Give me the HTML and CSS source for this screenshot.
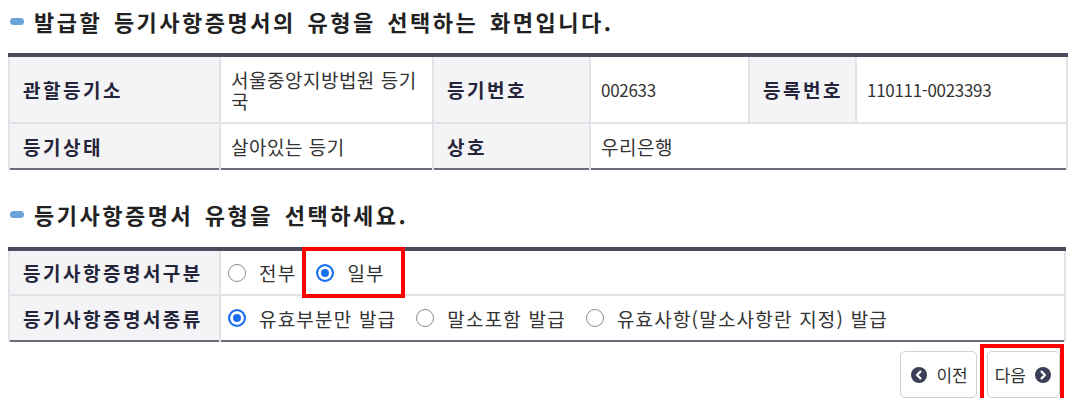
FILE: index.html
```html
<!DOCTYPE html>
<html lang="ko">
<head>
  <meta charset="UTF-8" />
  <meta name="viewport" content="width=device-width, initial-scale=1.0" />
  <title>등기사항증명서 발급</title>
  <link rel="stylesheet" href="styles.css">
</head>
<body>
  <div class="page">
    <h2 class="title">발급할 등기사항증명서의 유형을 선택하는 화면입니다.</h2>

    <table class="grid info">
      <colgroup>
        <col style="width: 211px">
        <col style="width: 213px">
        <col style="width: 157px">
        <col style="width: 159px">
        <col style="width: 107px">
        <col style="width: 211px">
      </colgroup>
      <tr class="tall">
        <th>관할등기소</th>
        <td>서울중앙지방법원 등기국</td>
        <th>등기번호</th>
        <td class="num">002633</td>
        <th>등록번호</th>
        <td class="num">110111-0023393</td>
      </tr>
      <tr>
        <th>등기상태</th>
        <td>살아있는 등기</td>
        <th>상호</th>
        <td colspan="3">우리은행</td>
      </tr>
    </table>

    <h2 class="title second">등기사항증명서 유형을 선택하세요.</h2>

    <table class="grid choice">
      <colgroup>
        <col style="width: 211px">
        <col>
      </colgroup>
      <tr>
        <th>등기사항증명서구분</th>
        <td>
          <div class="options">
            <label class="option"><input type="radio" name="scope"> 전부</label>
            <label class="option marked"><input type="radio" name="scope" checked> 일부</label>
          </div>
        </td>
      </tr>
      <tr>
        <th>등기사항증명서종류</th>
        <td>
          <div class="options">
            <label class="option"><input type="radio" name="kind" checked> 유효부분만 발급</label>
            <label class="option"><input type="radio" name="kind"> 말소포함 발급</label>
            <label class="option"><input type="radio" name="kind"> 유효사항(말소사항란 지정) 발급</label>
          </div>
        </td>
      </tr>
    </table>

    <div class="actions">
      <button class="nav-btn prev" type="button">
        <span class="arrow">
          <svg viewBox="0 0 16 16" width="16" height="16"><circle cx="8" cy="8" r="8" fill="#3b3e57"/><path d="M9.4 4.6 6 8l3.4 3.4" fill="none" stroke="#fff" stroke-width="2.2" stroke-linecap="round" stroke-linejoin="round"/></svg>
        </span>
        이전
      </button>
      <button class="nav-btn next marked" type="button">
        다음
        <span class="arrow">
          <svg viewBox="0 0 16 16" width="16" height="16"><circle cx="8" cy="8" r="8" fill="#3b3e57"/><path d="M6.6 4.6 10 8l-3.4 3.4" fill="none" stroke="#fff" stroke-width="2.2" stroke-linecap="round" stroke-linejoin="round"/></svg>
        </span>
      </button>
    </div>
  </div>
</body>
</html>
```

FILE: styles.css
```css
html, body {
  margin: 0;
  padding: 0;
  background: #fff;
  font-family: "Noto Sans CJK KR", "Noto Sans", sans-serif;
  color: #333;
}

.page {
  width: 1058px;
  padding: 4px 8px 0;
}

.title {
  display: flex;
  align-items: center;
  margin: 0;
  height: 34px;
  font-size: 22px;
  font-weight: 700;
  color: #222;
  word-spacing: 3px;
  letter-spacing: 2.5px;
}

.title::before {
  content: "";
  width: 14px;
  height: 7px;
  border-radius: 4px;
  background: #6aa3d8;
  margin: 0 10px 0 2px;
}

.title.second {
  margin-top: 27px;
}

.grid {
  width: 100%;
  table-layout: fixed;
  border-collapse: collapse;
  border-top: 4px solid #4b4d5f;
  border-bottom: 2px solid #6b6d7d;
  border-left: 1px solid #dcdde1;
  border-right: 2px solid #dcdde1;
}

.info {
  margin-top: 15px;
}

.choice {
  margin-top: 16px;
}

.grid th,
.grid td {
  border: 2px solid #e2e3e7;
  line-height: 21px;
  text-align: left;
  vertical-align: middle;
}

.grid tr:first-child th,
.grid tr:first-child td {
  border-top: none;
}

.grid tr:last-child th,
.grid tr:last-child td {
  border-bottom: none;
}

.grid th {
  background: #f4f4f7;
  color: #24243a;
  font-size: 19px;
  font-weight: 700;
  padding: 0 6px 0 13px;
  letter-spacing: 2.5px;
}

.grid td {
  background: #fff;
  padding: 0 10px;
  font-size: 19px;
  letter-spacing: 0.5px;
  color: #333;
}

.info tr {
  height: 46px;
}

.info tr.tall {
  height: 68px;
}

.info td.num {
  font-size: 17px;
  letter-spacing: -0.3px;
}

.choice tr {
  height: 46px;
}

.choice td {
  padding: 0 10px 0 7px;
}

.options {
  display: flex;
  align-items: center;
  gap: 20px;
}

.option {
  position: relative;
  display: flex;
  align-items: center;
  gap: 13px;
  font-size: 19px;
  letter-spacing: 1.2px;
  color: #333;
}

.option input {
  appearance: none;
  box-sizing: border-box;
  width: 18px;
  height: 18px;
  margin: 0;
  border: 1px solid #8d8d8d;
  border-radius: 50%;
  background: #fff;
}

.option input:checked {
  border: 2px solid #1a6ff0;
  background: #1a6ff0;
  box-shadow: inset 0 0 0 3px #fff;
}

.option.marked::after {
  content: "";
  position: absolute;
  left: -14px;
  right: -20px;
  top: -15px;
  bottom: -15px;
  border: 4px solid #ff0000;
  pointer-events: none;
}

.actions {
  display: flex;
  justify-content: flex-end;
  gap: 10px;
  margin-top: 9px;
  padding-right: 6px;
}

.nav-btn {
  position: relative;
  display: flex;
  align-items: center;
  gap: 9px;
  height: 47px;
  background: #fff;
  border: 1px solid #cfd0d4;
  border-radius: 5px;
  font-family: inherit;
  font-size: 17px;
  color: #333;
}

.nav-btn.prev {
  padding: 0 8px 0 10px;
}

.nav-btn.next {
  padding: 0 8px 0 7px;
}

.nav-btn .arrow {
  display: flex;
}

.nav-btn.marked::after {
  content: "";
  position: absolute;
  left: -8px;
  right: -5px;
  top: -8px;
  bottom: -10px;
  border: 4px solid #ff0000;
  pointer-events: none;
}
```
